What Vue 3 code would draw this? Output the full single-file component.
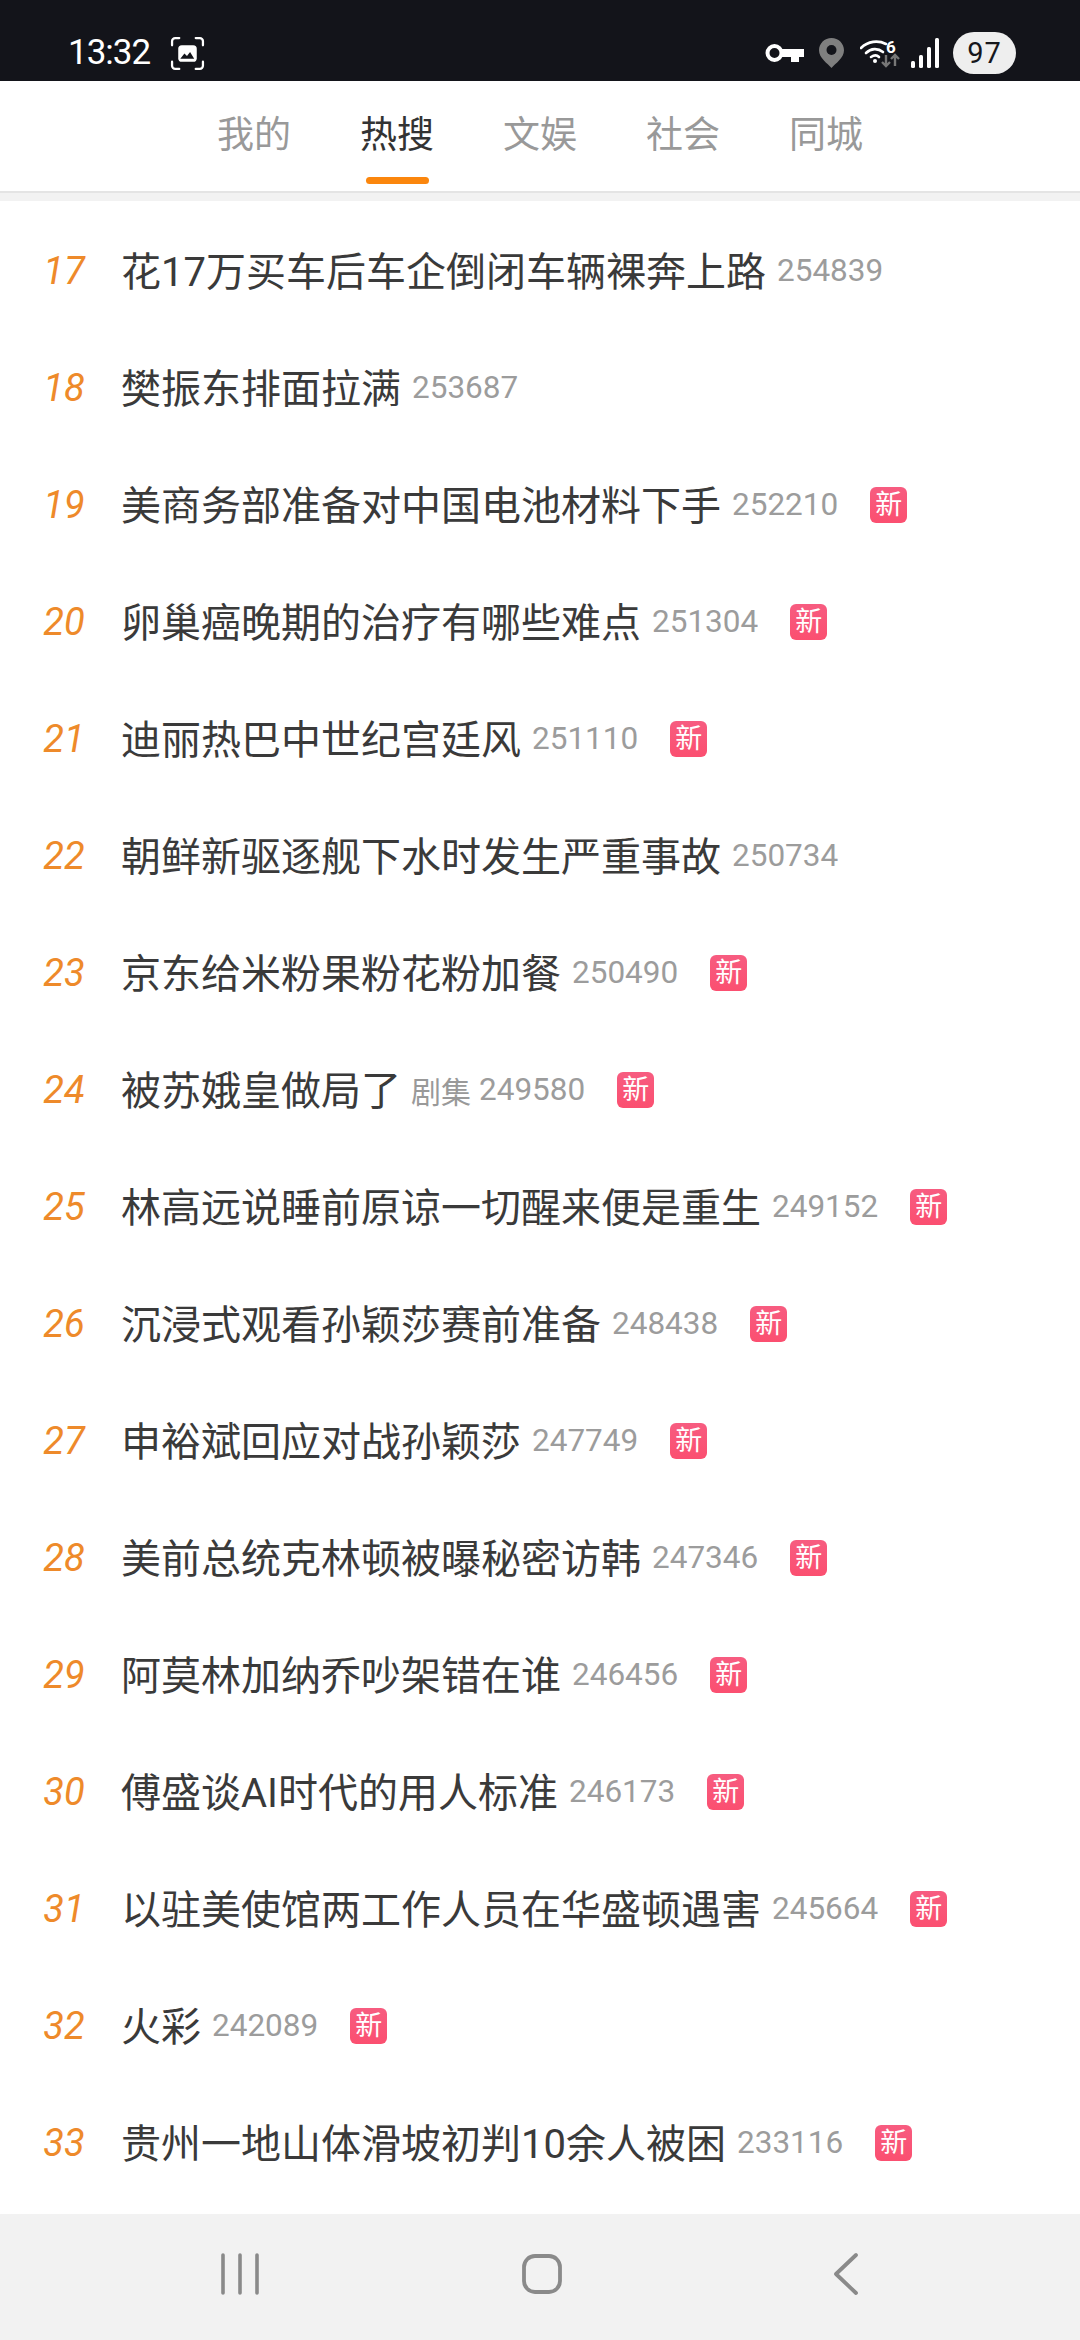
<template>
  <div class="page">
    <div class="status-bar">
      <div class="status-left">
        <span class="time">13:32</span>
        <svg class="shot-icon" width="35" height="35" viewBox="0 0 34 34">
          <path d="M2 9V5a3 3 0 0 1 3-3h4M25 2h4a3 3 0 0 1 3 3v4M32 25v4a3 3 0 0 1-3 3h-4M9 32H5a3 3 0 0 1-3-3v-4" fill="none" stroke="#fff" stroke-width="2.2" stroke-linecap="round" />
          <rect x="8" y="9" width="18" height="16" rx="3.5" fill="#fff" />
          <path d="M10 22l4-5 2.500 2.500 3-4 4 6.500z" fill="#13141a" />
        </svg>
      </div>
      <div class="status-right">
        <svg width="39" height="20" viewBox="0 0 39 20">
          <circle cx="9.500" cy="10" r="7" fill="none" stroke="#fff" stroke-width="4" />
          <path d="M17 6h22v8h-5v5h-8v-5h-9z" fill="#fff" />
        </svg>
        <svg class="pin" width="25" height="30" viewBox="0 0 25 30">
          <path d="M12.500 0C5.600 0 0 5.500 0 12.300 0 20 8.500 25.500 12.500 30 16.500 25.500 25 20 25 12.300 25 5.500 19.400 0 12.500 0z" fill="#7f7f7f" />
          <circle cx="12.500" cy="12" r="5" fill="#13141a" />
        </svg>
        <svg class="wifi" width="40" height="30" viewBox="0 0 40 30">
          <g fill="none" stroke="#fff" stroke-width="2.600" stroke-linecap="round">
            <path d="M1 10c7-7 17-8 25-4" />
            <path d="M6 15c5-5 12-5 17-1" />
            <path d="M11 19c3-2 6-2 8 0" />
          </g>
          <circle cx="15" cy="23" r="2" fill="#fff" />
          <text x="26" y="15" class="wifi-six">6</text>
          <path d="M26 17v11M22 24l4 4 4-4M35 28V17M31 21l4-4 4 4" fill="none" stroke="#777" stroke-width="2.400" />
        </svg>
        <svg class="signal" width="28" height="30" viewBox="0 0 28 30">
          <rect x="0" y="23" width="4" height="7" rx="1.500" fill="#fff" />
          <rect x="8" y="17" width="4" height="13" rx="1.500" fill="#fff" />
          <rect x="16" y="9" width="4" height="21" rx="1.500" fill="#fff" />
          <rect x="24" y="0" width="4" height="30" rx="1.500" fill="#fff" />
        </svg>
        <div class="battery">97</div>
      </div>
    </div>

    <div class="tabs">
      <div v-for="tab in tabs" :key="tab" class="tab" :class="{ active: tab === activeTab }">
        {{ tab }}
      </div>
    </div>

    <div class="list">
      <div v-for="item in items" :key="item.rank" class="row">
        <span class="rank">{{ item.rank }}</span>
        <span class="title">{{ item.title }}</span>
        <span v-if="item.tag" class="tag">{{ item.tag }}</span>
        <span class="count">{{ item.count }}</span>
        <span v-if="item.isNew" class="badge">新</span>
      </div>
    </div>

    <div class="nav-bar">
      <svg width="40" height="42" viewBox="0 0 40 42">
        <path d="M3 2v38M20 2v38M37 2v38" stroke="#8a8a8a" stroke-width="3.600" stroke-linecap="round" />
      </svg>
      <svg class="nav-home" width="42" height="42" viewBox="0 0 42 42">
        <rect x="3" y="3" width="36" height="36" rx="11" fill="none" stroke="#8a8a8a" stroke-width="3.800" />
      </svg>
      <svg class="nav-back" width="26" height="44" viewBox="0 0 26 44">
        <path d="M23 3L3 22l20 19" fill="none" stroke="#8a8a8a" stroke-width="3.800" stroke-linecap="round" stroke-linejoin="round" />
      </svg>
    </div>
  </div>
</template>

<script setup>
const tabs = ['我的', '热搜', '文娱', '社会', '同城'];
const activeTab = '热搜';

const items = [
  { rank: 17, title: '花17万买车后车企倒闭车辆裸奔上路', count: 254839 },
  { rank: 18, title: '樊振东排面拉满', count: 253687 },
  { rank: 19, title: '美商务部准备对中国电池材料下手', count: 252210, isNew: true },
  { rank: 20, title: '卵巢癌晚期的治疗有哪些难点', count: 251304, isNew: true },
  { rank: 21, title: '迪丽热巴中世纪宫廷风', count: 251110, isNew: true },
  { rank: 22, title: '朝鲜新驱逐舰下水时发生严重事故', count: 250734 },
  { rank: 23, title: '京东给米粉果粉花粉加餐', count: 250490, isNew: true },
  { rank: 24, title: '被苏娥皇做局了', tag: '剧集', count: 249580, isNew: true },
  { rank: 25, title: '林高远说睡前原谅一切醒来便是重生', count: 249152, isNew: true },
  { rank: 26, title: '沉浸式观看孙颖莎赛前准备', count: 248438, isNew: true },
  { rank: 27, title: '申裕斌回应对战孙颖莎', count: 247749, isNew: true },
  { rank: 28, title: '美前总统克林顿被曝秘密访韩', count: 247346, isNew: true },
  { rank: 29, title: '阿莫林加纳乔吵架错在谁', count: 246456, isNew: true },
  { rank: 30, title: '傅盛谈AI时代的用人标准', count: 246173, isNew: true },
  { rank: 31, title: '以驻美使馆两工作人员在华盛顿遇害', count: 245664, isNew: true },
  { rank: 32, title: '火彩', count: 242089, isNew: true },
  { rank: 33, title: '贵州一地山体滑坡初判10余人被困', count: 233116, isNew: true },
];
</script>

<style>
html,
body {
  margin: 0;
  background: #fff;
}
</style>

<style scoped>
.page {
  width: 1080px;
  height: 2340px;
  display: flex;
  flex-direction: column;
  font-family: Roboto, "Noto Sans CJK SC", sans-serif;
  overflow: hidden;
}

.status-bar {
  height: 81px;
  flex: none;
  background: #13141a;
  display: flex;
  justify-content: space-between;
  padding: 32px 64px 7px 68px;
  box-sizing: border-box;
}

.status-left,
.status-right {
  display: flex;
  align-items: center;
}

.time {
  color: #fff;
  font-size: 35px;
  font-weight: 400;
  letter-spacing: -1px;
  line-height: 42px;
}

.shot-icon {
  margin-left: 20px;
}

.pin {
  margin-left: 15px;
}

.wifi {
  margin-left: 16px;
}

.wifi-six {
  fill: #fff;
  font-size: 17px;
  font-weight: 700;
  font-family: Roboto, sans-serif;
}

.signal {
  margin-left: 11px;
}

.battery {
  margin-left: 14px;
  width: 63px;
  height: 42px;
  border-radius: 21px;
  background: #eee;
  color: #16171c;
  font-size: 29px;
  font-weight: 400;
  line-height: 42px;
  text-align: center;
  letter-spacing: 1px;
}

.tabs {
  height: 112px;
  flex: none;
  box-sizing: border-box;
  background: #fff;
  border-bottom: 2px solid #e4e4e4;
  display: flex;
  justify-content: center;
  gap: 69px;
}

.tab {
  position: relative;
  font-size: 37px;
  line-height: 110px;
  color: #999;
}

.tab.active {
  color: #333;
}

.tab.active::after {
  content: "";
  position: absolute;
  left: 50%;
  bottom: 7px;
  width: 63px;
  height: 7px;
  margin-left: -31px;
  border-radius: 4px;
  background: #fb860d;
}

.list {
  flex: 1;
  background: #fff;
  border-top: 8px solid #f2f2f2;
  padding-top: 11px;
}

.row {
  height: 117px;
  display: flex;
  align-items: center;
  padding-left: 24px;
}

.rank {
  width: 80px;
  text-align: center;
  margin-right: 17px;
  color: #ee8a2a;
  font-size: 38px;
  font-style: italic;
  font-weight: 400;
}

.title {
  font-size: 40px;
  color: #3a3a3a;
  margin-bottom: 3px;
}

.tag {
  margin-left: 10px;
  font-size: 30px;
  color: #999;
}

.count {
  margin-left: 11px;
  font-size: 31.5px;
  color: #9c9c9c;
}

.tag + .count {
  margin-left: 8px;
}

.badge {
  margin-left: 32px;
  width: 37px;
  height: 36px;
  border-radius: 6px;
  background: linear-gradient(#f75c80, #fb4f70);
  color: #fff;
  font-size: 27px;
  line-height: 36px;
  text-align: center;
}

.nav-bar {
  height: 126px;
  flex: none;
  background: #f2f2f2;
  display: flex;
  align-items: center;
  padding: 0 0 6px 220px;
  box-sizing: border-box;
}

.nav-home {
  margin-left: 261px;
}

.nav-back {
  margin-left: 270px;
}
</style>
